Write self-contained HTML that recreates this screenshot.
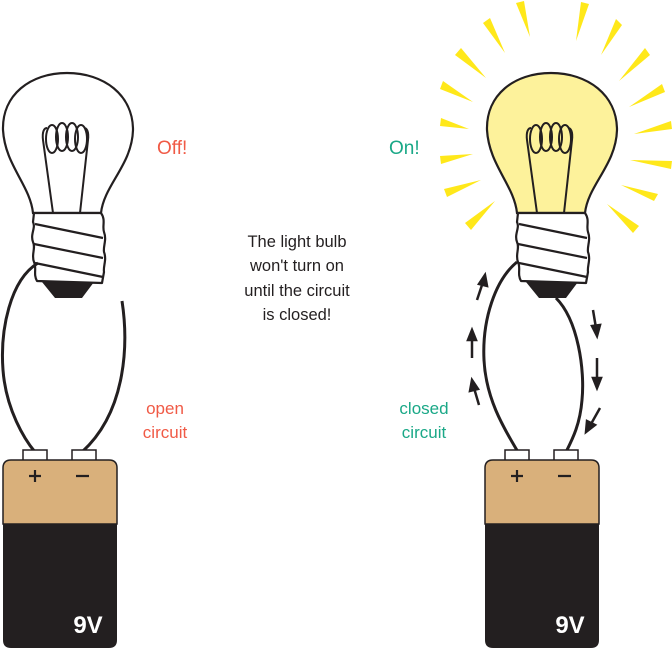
<!DOCTYPE html>
<html><head><meta charset="utf-8"><style>
html,body{margin:0;padding:0;background:#fff;width:672px;height:649px;overflow:hidden}
svg{display:block}
text{font-family:"Liberation Sans",sans-serif}
</style></head><body>
<svg width="672" height="649" viewBox="0 0 672 649">
<defs>
<g id="bulb">
  <path d="M33,213 C30,185 5,165 3,130 C2,95 30,73 67,73 C104,73 133,95 133,130 C132,165 104,185 101,213 Z" stroke="#231f20" stroke-width="2.2"/>
  <g fill="none" stroke="#231f20" stroke-width="2">
    <path d="M53,213 L43,140 C42,132 44,128 47,128"/>
    <path d="M80,213 L88,140 C89,132 87,128 84,128"/>
    <ellipse cx="52" cy="139" rx="6" ry="14"/>
    <ellipse cx="62" cy="137" rx="6" ry="14"/>
    <ellipse cx="72" cy="137" rx="6" ry="14"/>
    <ellipse cx="81" cy="139" rx="6" ry="14"/>
  </g>
  <path d="M34,213 L101,213 C106,220 102,226 104,232 C107,240 103,246 104,252 C107,260 103,266 104,272 L102,283 L37,281 C33,274 37,268 34,262 C31,255 36,248 33,242 C30,234 36,228 33,222 Z" fill="#fff" stroke="#231f20" stroke-width="2.2" stroke-linejoin="round"/>
  <g stroke="#231f20" stroke-width="2.2">
    <line x1="35" y1="224" x2="103" y2="238"/>
    <line x1="34" y1="244" x2="103" y2="258"/>
    <line x1="35" y1="263" x2="103" y2="277"/>
  </g>
  <path d="M42,282 L94,282 L82,298 L55,298 Z" fill="#231f20"/>
</g>
<g id="batt">
  <rect x="23" y="450" width="24" height="12" fill="#fff" stroke="#231f20" stroke-width="1.5"/>
  <rect x="72" y="450" width="24" height="12" fill="#fff" stroke="#231f20" stroke-width="1.5"/>
  <path d="M11,460 L109,460 Q117,460 117,468 L117,524 L3,524 L3,468 Q3,460 11,460 Z" fill="#d9b07b" stroke="#231f20" stroke-width="1.5"/>
  <path d="M3,524 L117,524 L117,640 Q117,648 109,648 L11,648 Q3,648 3,640 Z" fill="#231f20"/>
  <path d="M29,476 L41,476 M35,470 L35,482 M76,476 L89,476" stroke="#231f20" stroke-width="2.2"/>
  <text x="88" y="633" font-size="24" font-weight="bold" fill="#fff" text-anchor="middle">9V</text>
</g>
</defs>

<!-- left -->
<use href="#bulb" fill="#fff"/>
<path d="M38,263 C10,280 0,330 3,370 C6,410 25,440 35,452" fill="none" stroke="#231f20" stroke-width="3"/>
<path d="M122,301 C128,340 128,410 82,452" fill="none" stroke="#231f20" stroke-width="3"/>
<use href="#batt"/>

<!-- rays -->
<g fill="#ffe81a">
  <polygon points="516,3 524,1 530,37"/>
  <polygon points="581,2 589,4 576,41"/>
  <polygon points="483,23 490,18 505,53"/>
  <polygon points="616,19 622,25 601,55"/>
  <polygon points="455,55 461,48 486,78"/>
  <polygon points="645,48 650,55 619,81"/>
  <polygon points="440,89 443,81 473,102"/>
  <polygon points="662,84 665,92 629,107"/>
  <polygon points="440,126 441,118 469,129"/>
  <polygon points="671,121 672,129 634,134"/>
  <polygon points="440,156 441,164 473,154"/>
  <polygon points="672,161 671,169 630,160"/>
  <polygon points="444,189 447,197 481,180"/>
  <polygon points="658,194 654,201 621,185"/>
  <polygon points="465,223 471,230 495,201"/>
  <polygon points="639,226 633,233 607,204"/>
</g>

<!-- right -->
<g transform="translate(484,0)"><use href="#bulb" fill="#fdf29b"/></g>
<path d="M517,262 C495,280 482,320 484,360 C486,400 505,430 518,452" fill="none" stroke="#231f20" stroke-width="3"/>
<path d="M556,298 C578,320 585,370 582,400 C580,425 572,440 566,452" fill="none" stroke="#231f20" stroke-width="3"/>
<g transform="translate(482,0)"><use href="#batt"/></g>

<!-- arrows -->
<g stroke="#231f20" stroke-width="2.5" fill="#231f20">
  <line x1="477" y1="300" x2="483" y2="282"/><polygon points="485,275 479,284 487,286"/>
  <line x1="472" y1="358" x2="472" y2="338"/><polygon points="472,330 468,340 476,340"/>
  <line x1="479" y1="405" x2="474" y2="388"/><polygon points="472,380 470,391 478,389"/>
  <line x1="593" y1="310" x2="596" y2="328"/><polygon points="597,336 592,326 600,325"/>
  <line x1="597" y1="358" x2="597" y2="380"/><polygon points="597,388 593,378 601,378"/>
  <line x1="600" y1="408" x2="591" y2="424"/><polygon points="586,432 587,421 595,425"/>
</g>

<!-- labels -->
<text x="157" y="154" font-size="19" fill="#f05a46">Off!</text>
<text x="389" y="154" font-size="19" fill="#1aa887">On!</text>
<g font-size="17" fill="#f05a46" text-anchor="middle">
  <text x="165" y="414">open</text>
  <text x="165" y="438">circuit</text>
</g>
<g font-size="17" fill="#1aa887" text-anchor="middle">
  <text x="424" y="414">closed</text>
  <text x="424" y="438">circuit</text>
</g>
<g font-size="16.5" fill="#231f20" text-anchor="middle">
  <text x="297" y="247">The light bulb</text>
  <text x="297" y="271">won't turn on</text>
  <text x="297" y="296">until the circuit</text>
  <text x="297" y="320">is closed!</text>
</g>
</svg>
</body></html>
